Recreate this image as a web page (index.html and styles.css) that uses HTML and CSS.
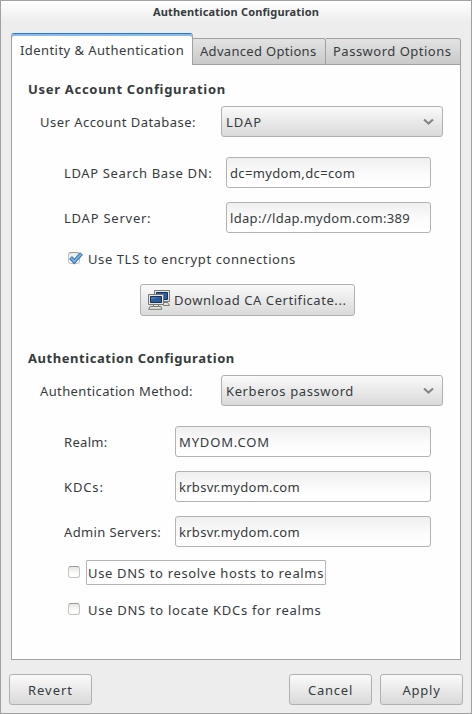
FILE: index.html
```html
<!DOCTYPE html>
<html lang="en">
<head>
<meta charset="utf-8">
<title>Authentication Configuration</title>
<link rel="stylesheet" href="styles.css">
</head>
<body>
<div class="window">
  <header class="titlebar">Authentication Configuration</header>
  <nav class="tabs">
    <div class="tab tab-active ls-43">Identity &amp; Authentication</div>
    <div class="tab tab-advanced ls-31">Advanced Options</div>
    <div class="tab tab-password ls-50">Password Options</div>
  </nav>
  <main class="panel">
    <h2 class="heading ls-70">User Account Configuration</h2>
    <div class="row">
      <span class="label label-wide ls-47">User Account Database:</span>
      <div class="combo"><span class="ls-95">LDAP</span>
        <svg class="chevron" viewBox="0 0 11 8"><path d="M1 1.500 5.500 5.500 10 1.500"/></svg></div>
    </div>
    <div class="row row-first indent">
      <span class="label label-dn ls-63">LDAP Search Base DN:</span>
      <div class="entry ls-36">dc=mydom,dc=com</div>
    </div>
    <div class="row row-next indent">
      <span class="label label-dn ls-76">LDAP Server:</span>
      <div class="entry ls-31">ldap://ldap.mydom.com:389</div>
    </div>
    <div class="check check-tls">
      <span class="box"><svg class="tick" viewBox="0 0 16 14"><path class="tick-edge" d="M2.500 6.500 6.300 10.500 13.500 2.500"/><path class="tick-fill" d="M3 7 6.300 10.500 13.200 2.800"/></svg></span>
      <span class="check-label ls-58">Use TLS to encrypt connections</span>
    </div>
    <div class="button download">
      <svg class="computers" viewBox="0 0 22 20">
        <path class="case" d="M6.500.5h15v11h-15zM14.500 12.500h5l2 3h-6z"/>
        <path class="screen" d="M8.500 2.500h11v7h-11z"/>
        <path class="case" d="M.5 4.500h15v10h-15zM5.500 14.500h5v2h-5zM2 16.500h11l.8 2.800H.7z"/>
        <path class="screen" d="M2.500 6.500h11v6h-11z"/>
        <path class="glare" d="M3 7h8l-8 3z"/>
      </svg>
      <span class="ls-56">Download CA Certificate...</span>
    </div>
    <h2 class="heading heading-second ls-56">Authentication Configuration</h2>
    <div class="row">
      <span class="label label-wide ls-38">Authentication Method:</span>
      <div class="combo"><span class="ls-61">Kerberos password</span>
        <svg class="chevron" viewBox="0 0 11 8"><path d="M1 1.500 5.500 5.500 10 1.500"/></svg></div>
    </div>
    <div class="row row-first indent">
      <span class="label label-krb ls-31">Realm:</span>
      <div class="entry ls-85">MYDOM.COM</div>
    </div>
    <div class="row row-next indent">
      <span class="label label-krb ls-85">KDCs:</span>
      <div class="entry ls-28">krbsvr.mydom.com</div>
    </div>
    <div class="row row-next indent">
      <span class="label label-krb ls-36">Admin Servers:</span>
      <div class="entry ls-28">krbsvr.mydom.com</div>
    </div>
    <div class="check check-resolve">
      <span class="box"></span>
      <span class="check-label focused ls-67">Use DNS to resolve hosts to realms</span>
    </div>
    <div class="check check-locate">
      <span class="box"></span>
      <span class="check-label ls-70">Use DNS to locate KDCs for realms</span>
    </div>
  </main>
  <footer class="actions">
    <div class="button action revert ls-95">Revert</div>
    <div class="button action ls-76">Cancel</div>
    <div class="button action ls-76">Apply</div>
  </footer>
</div>
</body>
</html>
```
FILE: styles.css
```css
* { box-sizing: border-box; }

body {
  margin: 0;
  font: 13px/18px "Noto Sans", sans-serif;
  color: #363b3d;
}

.window {
  display: flex;
  flex-direction: column;
  width: 472px;
  height: 714px;
  border: 1px solid #a1a1a1;
  background: linear-gradient(#fff, #ededed 21px);
}

.titlebar {
  height: 32px;
  padding-top: 2px;
  text-align: center;
  font-size: 11px;
  font-weight: bold;
  letter-spacing: .15px;
}

/* Tabs overlap the panel's top border by one pixel */
.tabs {
  display: flex;
  align-items: flex-end;
  height: 32px;
  margin: 0 10px -1px;
  position: relative;
}

.tab {
  height: 27px;
  padding: 3px 0 0 7px;
  border: 1px solid #a1a1a1;
  border-left: 0;
  border-top-right-radius: 3px;
  background: linear-gradient(#e3e3e3, #c9c9c9);
  white-space: nowrap;
}

.tab-active {
  width: 182px;
  height: 32px;
  padding: 7px 0 0 8px;
  border-left: 1px solid #a1a1a1;
  border-top: 1px solid #2a76c6;
  border-bottom: 0;
  border-radius: 3px 3px 0 0;
  background: #fefefe;
  box-shadow: inset 0 2px #8abaf2;
}

.tab-advanced { width: 133px; }
.tab-password { width: 135px; }

.panel {
  display: flex;
  flex-direction: column;
  height: 596px;
  margin: 0 10px;
  padding: 15px 0 0 16px;
  border: 1px solid #a1a1a1;
  background: #fefefe;
}

.heading {
  margin: 0 0 8px;
  font-size: 13px;
  line-height: 18px;
}

.heading-second { margin-top: 33px; }

.row {
  display: flex;
  align-items: center;
  height: 31px;
  padding-left: 12px;
}

.indent { padding-left: 36px; }
.row-first { margin-top: 20px; }
.row-next { margin-top: 14px; }

.label { white-space: nowrap; padding-top: 1px; }
.label-wide { width: 181px; }
.label-dn { width: 162px; }
.label-krb { width: 111px; }

.combo {
  display: flex;
  align-items: center;
  justify-content: space-between;
  width: 222px;
  height: 31px;
  padding: 1px 8px 0 4px;
  border: 1px solid #b0b0b0;
  border-radius: 3px;
  background: linear-gradient(#fafafa, #d9d9d9);
}

.chevron {
  width: 11px;
  height: 8px;
  margin-bottom: 1px;
  fill: none;
  stroke: #858785;
  stroke-width: 2.2;
}

.entry {
  flex: 1;
  height: 31px;
  margin-right: 29px;
  padding: 6px 0 0 3px;
  border: 1px solid #b2b2b2;
  border-radius: 3px;
  background: linear-gradient(#efefef, #fcfcfc 60%, #fff);
}

.check {
  display: flex;
  align-items: center;
  height: 25px;
  padding-left: 40px;
}

.check-tls { margin: 13px 0; }
.check-resolve { margin-top: 13px; }
.check-locate { margin-top: 12px; }

.box {
  width: 12px;
  height: 12px;
  margin: 0 6px 2px 0;
  border: 1px solid #c3c5be;
  border-top-color: #999e90;
  border-radius: 3px;
  background: linear-gradient(#e6e6e4, #fff 70%);
}

.tick {
  display: block;
  width: 16px;
  height: 14px;
  margin: -2px 0 0 -1px;
  fill: none;
}

.tick-edge { stroke: #3a6fb3; stroke-width: 4; }
.tick-fill { stroke: #75aeeb; stroke-width: 2; }

.check-label {
  height: 25px;
  padding: 3px 0 0 1px;
  border: 1px solid transparent;
  white-space: nowrap;
}

.focused {
  width: 240px;
  border-color: #b4b4b4;
  border-radius: 1px;
}

.button {
  display: flex;
  align-items: center;
  justify-content: center;
  border: 1px solid #b0b0b0;
  border-radius: 3px;
  background: linear-gradient(#fafafa, #d9d9d9);
}

.download {
  justify-content: flex-start;
  gap: 4px;
  width: 215px;
  height: 32px;
  margin-left: 112px;
  padding-left: 7px;
}

.computers { width: 22px; height: 20px; }
.case { fill: #e6e6de; stroke: #777972; }
.screen { fill: #2d5c9e; stroke: #14305c; }
.glare { fill: #4a78b4; }

.actions {
  display: flex;
  gap: 8px;
  margin: 14px 8px 0;
}

.action { width: 83px; height: 31px; padding-top: 1px; }
.revert { margin-right: auto; }

.ls-28 { letter-spacing: .28px; }
.ls-31 { letter-spacing: .31px; }
.ls-36 { letter-spacing: .36px; }
.ls-38 { letter-spacing: .38px; }
.ls-43 { letter-spacing: .43px; }
.ls-47 { letter-spacing: .47px; }
.ls-50 { letter-spacing: .5px; }
.ls-56 { letter-spacing: .56px; }
.ls-58 { letter-spacing: .58px; }
.ls-61 { letter-spacing: .61px; }
.ls-63 { letter-spacing: .63px; }
.ls-67 { letter-spacing: .67px; }
.ls-70 { letter-spacing: .7px; }
.ls-76 { letter-spacing: .76px; }
.ls-85 { letter-spacing: .85px; }
.ls-95 { letter-spacing: .95px; }
```
